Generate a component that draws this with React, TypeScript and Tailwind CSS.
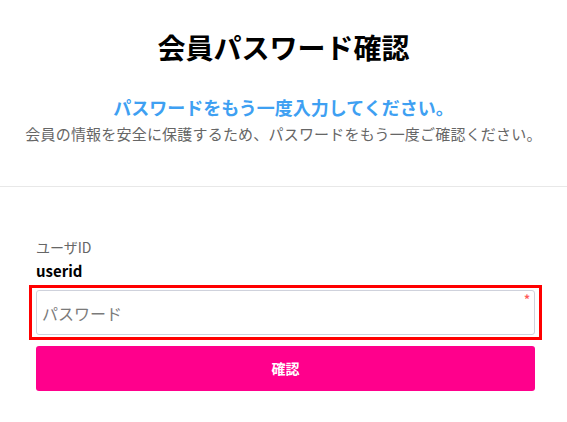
const font = { fontFamily: '"Noto Sans CJK JP", "Noto Sans", sans-serif' };

export default function App() {
  return (
    <div className="min-h-[422px] w-full bg-white" style={font}>
      <div className="flex flex-col items-center pt-[30px]">
        <h1 className="text-[28px] font-bold leading-[34px] text-black">
          会員パスワード確認
        </h1>
        <p className="mt-[31px] text-[18px] font-bold leading-[24px] text-[#3ea0f2]">
          パスワードをもう一度入力してください。
        </p>
        <p className="mt-[4px] text-[15px] leading-[22px] tracking-[0.2px] text-[#666666]">
          会員の情報を安全に保護するため、パスワードをもう一度ご確認ください。
        </p>
      </div>

      <div className="mt-[41px] h-px w-full bg-[#e8e8e8]" />

      <div className="pl-[36px] pr-[32px] pt-[50px]">
        <div className="text-[14px] leading-[20px] text-[#666666]">ユーザID</div>
        <div className="mt-[3px] text-[15px] font-bold leading-[22px] text-black">
          userid
        </div>

        <div className="-mx-[7px] mt-[3px] border-[3px] border-[#ff0000] px-[4px] py-[2px]">
          <div className="relative flex h-[45px] items-center rounded-[3px] border border-[#cfd2dc] bg-white px-[5px]">
            <input
              type="password"
              placeholder="パスワード"
              className="w-full bg-transparent text-[16px] text-black outline-none placeholder:text-[#7a7a7a]"
              style={font}
            />
            <span className="absolute right-[4px] top-[1px] text-[12px] font-bold leading-[14px] text-[#ff5a5a]">
              *
            </span>
          </div>
        </div>

        <button
          className="mt-[6px] flex h-[45px] w-full items-center justify-center rounded-[3px] bg-[#ff008c] text-[14px] font-bold text-white"
          style={font}
        >
          確認
        </button>
      </div>
    </div>
  );
}
